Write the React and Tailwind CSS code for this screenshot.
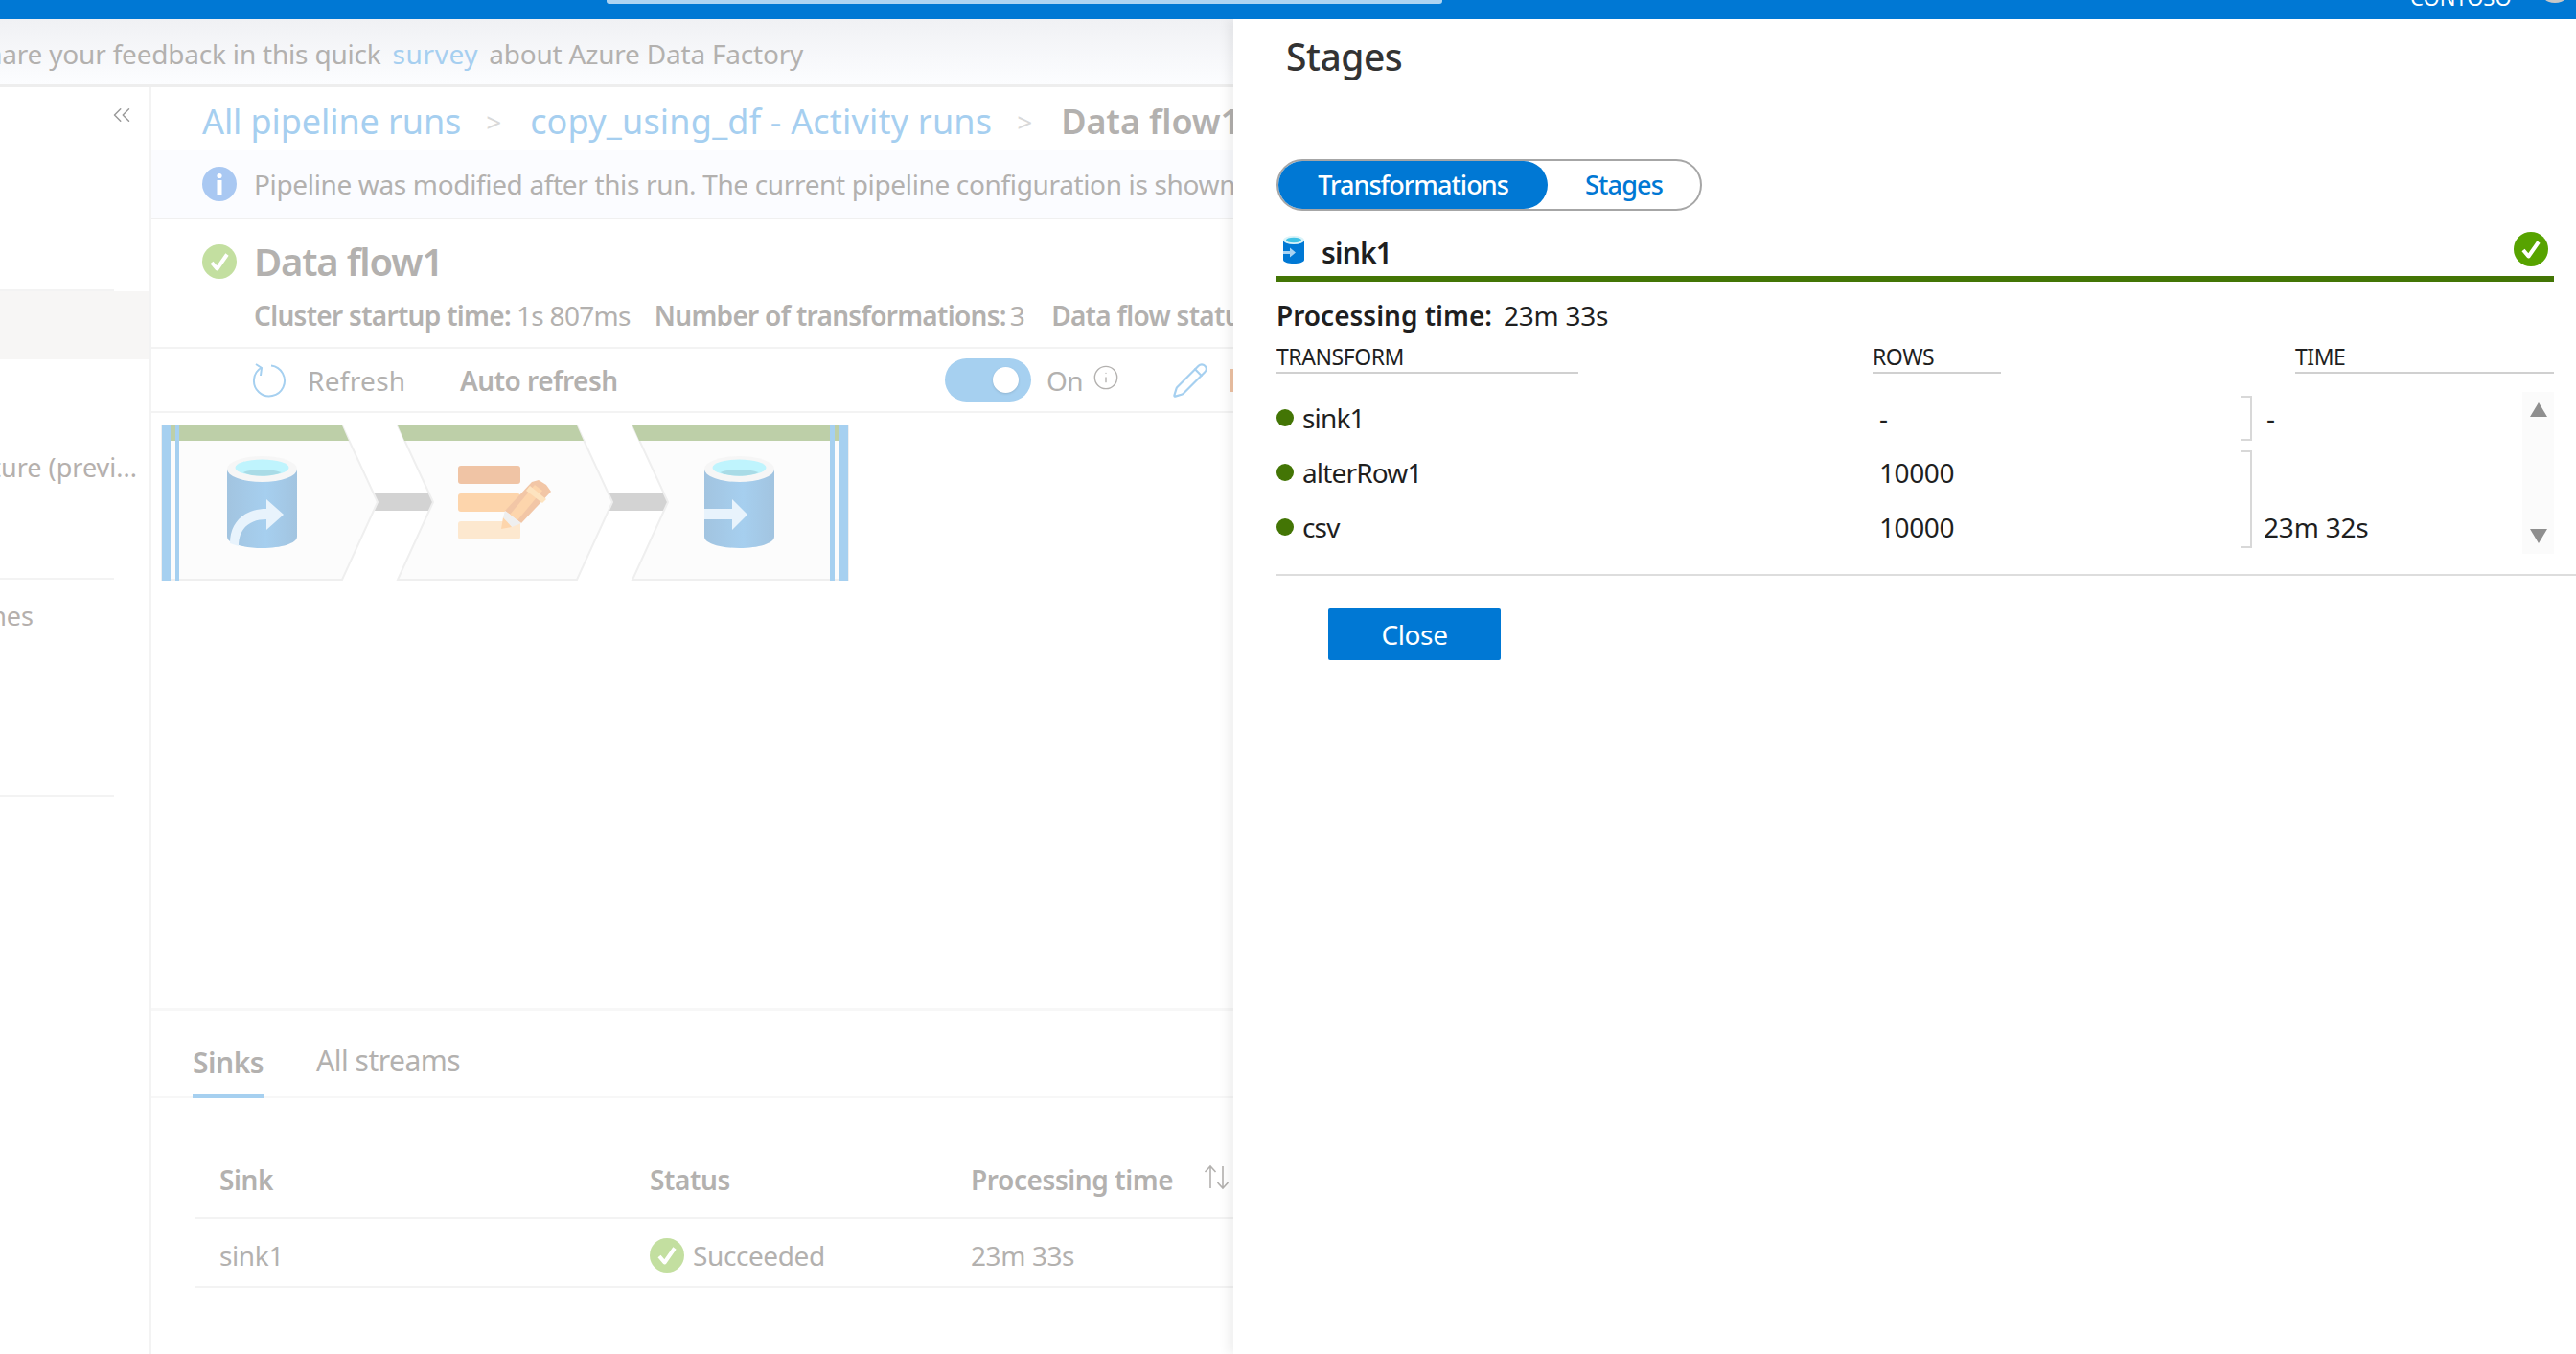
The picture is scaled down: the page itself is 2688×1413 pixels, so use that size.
import { ChevronsLeft, Info, Pencil } from 'lucide-react'

function CheckIcon({ color, size = 36 }) {
  return (
    <svg width={size} height={size} viewBox="0 0 36 36" className="shrink-0">
      <circle cx="18" cy="18" r="18" fill={color} />
      <path d="M10 19l5.5 6.5L26 10.5" fill="none" stroke="#fff" strokeWidth="4" strokeLinejoin="round" />
    </svg>
  )
}

function Cylinder({ cx, id }) {
  const l = cx - 36.5
  const r = cx + 36.5
  return (
    <g>
      <path d={`M${l} 489 L${r} 489 L${r} 560 C${r} 567 ${cx + 20} 572 ${cx} 572 C${cx - 20} 572 ${l} 567 ${l} 560 Z`} fill={`url(#${id})`} />
      <ellipse cx={cx} cy="489.5" rx="36.5" ry="13.5" fill="#f6f6f6" />
      <ellipse cx={cx} cy="488" rx="28" ry="8.5" fill="#bff4fd" />
      <path d={`M${cx - 20} 493 C${cx - 10} 489 ${cx + 10} 489 ${cx + 20} 493 C${cx + 10} 498 ${cx - 10} 498 ${cx - 20} 493 Z`} fill="#a9dbe6" />
    </g>
  )
}

function PipelineDiagram() {
  return (
    <svg width="718" height="164" viewBox="168 443 718 164" className="block">
      <defs>
        <linearGradient id="cylA" x1="0" x2="1" y1="0" y2="0">
          <stop offset="0" stopColor="#a2c4e0" />
          <stop offset="0.55" stopColor="#a6cfef" />
          <stop offset="1" stopColor="#a2c4e0" />
        </linearGradient>
      </defs>

      {/* connectors */}
      <rect x="390" y="515" width="62" height="18" fill="#d3d3d3" />
      <rect x="636" y="515" width="62" height="18" fill="#d3d3d3" />

      {/* chevrons */}
      <polygon points="169,444 357,444 394,524 357,605 169,605" fill="#fcfcfc" stroke="#efefef" strokeWidth="2" />
      <polygon points="415,444 602,444 639,524 602,605 415,605 452,524" fill="#fcfcfc" stroke="#efefef" strokeWidth="2" />
      <polygon points="660,444 885,444 885,605 660,605 697,524" fill="#fcfcfc" stroke="#efefef" strokeWidth="2" />

      {/* green headers */}
      <polygon points="169,444 357,444 364,460 169,460" fill="#bdcfa8" />
      <polygon points="415,444 602,444 609,460 422,460" fill="#bdcfa8" />
      <polygon points="660,444 884,444 884,460 667,460" fill="#bdcfa8" />

      {/* selection bars */}
      <rect x="169" y="443" width="9" height="163" fill="#a6d0f0" />
      <rect x="183" y="443" width="4" height="163" fill="#a6d0f0" />
      <rect x="866" y="443" width="5" height="163" fill="#a6d0f0" />
      <rect x="876" y="443" width="9" height="163" fill="#a6d0f0" />

      {/* source */}
      <Cylinder cx={273.5} id="cylA" />
      <path d="M240 567 C240 545 255 531 278 531 L278 521 L296 537 L278 553 L278 542 C262 542 249 550 249 570 Z" fill="#e8f3fc" />

      {/* alter row */}
      <rect x="478" y="486" width="65" height="19" rx="3" fill="#f0c4a5" />
      <rect x="478" y="515" width="65" height="19" rx="3" fill="#fdd5ac" />
      <rect x="478" y="544" width="65" height="19" rx="3" fill="#fde8cf" />
      <polygon points="527,533 544,546 575,513 570,506 562,501 555,503" fill="#f2c6a6" />
      <polygon points="532,537 540,543 566,512 558,506" fill="#fdd5ac" />
      <polygon points="553,507 570,521 566,525 549,512" fill="#fde3bf" />
      <polygon points="527,533 544,546 534,550 525,540" fill="#efefef" />
      <polygon points="525,540 534,550 523,552" fill="#fdd5ac" />

      {/* sink */}
      <Cylinder cx={771.5} id="cylA" />
      <path d="M735 531 L764 531 L764 521 L780 537 L764 553 L764 542 L735 542 Z" fill="#e8f3fc" />
    </svg>
  )
}

function Sidebar() {
  return (
    <div className="w-[158px] shrink-0 border-r-[3px] border-[#f3f3f3] overflow-hidden text-[27px] text-[#b5b0ad]">
      <div className="flex justify-end pr-[11px] pt-[14px] h-[211px] items-start">
        <ChevronsLeft size={30} strokeWidth={1.2} className="text-[#9a9a9a] mr-[2px]" />
      </div>
      <div className="w-[119px] h-[2px] bg-[#f3f3f3]" />
      <div className="h-[71px] bg-[#f7f6f5]" />
      <div className="h-[228px] pr-[12px] pt-[90px] flex justify-end whitespace-nowrap leading-[46px]">
        structure (previ...
      </div>
      <div className="w-[119px] h-[2px] bg-[#f3f3f3]" />
      <div className="h-[225px] w-[35px] flex justify-end whitespace-nowrap pt-[18px] leading-[40px]">
        Pipelines
      </div>
      <div className="w-[119px] h-[2px] bg-[#f3f3f3]" />
    </div>
  )
}

function RunDetails() {
  return (
    <div className="flex-1 min-w-0 flex flex-col text-[#b3b1af] overflow-hidden">
      {/* breadcrumb */}
      <div className="h-[66px] shrink-0 flex items-center pl-[53px] pt-[6px] text-[36px] whitespace-nowrap tracking-[-0.1px] text-[#a6cff0]">
        <span>All pipeline runs</span>
        <span className="text-[#d9d9d9] text-[28px] ml-[26px] mr-[30px]">&gt;</span>
        <span className="tracking-[0.2px]">copy_using_df - Activity runs</span>
        <span className="text-[#d9d9d9] text-[28px] ml-[26px] mr-[30px]">&gt;</span>
        <span className="font-semibold text-[#b3b1af]">Data flow1</span>
      </div>

      {/* modified notice */}
      <div className="h-[72px] shrink-0 flex items-center pl-[53px] gap-[18px] bg-[#fbfcff] border-b-2 border-[#f0f0f0] text-[28px] whitespace-nowrap tracking-[-0.35px]">
        <svg width="36" height="36" viewBox="0 0 36 36" className="shrink-0">
          <circle cx="18" cy="18" r="18" fill="#a9c8f2" />
          <circle cx="18" cy="9.5" r="2.6" fill="#fff" />
          <rect x="15.5" y="14" width="5" height="15" fill="#fff" />
        </svg>
        <span>Pipeline was modified after this run. The current pipeline configuration is shown</span>
      </div>

      {/* title and stats */}
      <div className="h-[135px] shrink-0 border-b-2 border-[#f3f3f3] pl-[53px] pt-[26px]">
        <div className="flex items-center gap-[18px] h-[36px]">
          <CheckIcon color="#c3dfa0" />
          <span className="text-[40px] font-semibold tracking-[-1.2px]">Data flow1</span>
        </div>
        <div className="flex items-center pl-[54px] mt-[17px] text-[28px] whitespace-nowrap tracking-[-0.7px]">
          <span className="font-semibold">Cluster startup time:</span>
          <span className="ml-[6px]">1s 807ms</span>
          <span className="font-semibold ml-[25px]">Number of transformations:</span>
          <span className="ml-[4px]">3</span>
          <span className="font-semibold ml-[28px]">Data flow status</span>
        </div>
      </div>

      {/* toolbar */}
      <div className="h-[67px] shrink-0 flex items-center border-b-2 border-[#f3f3f3] text-[28px] whitespace-nowrap tracking-[-0.5px]">
        <svg width="38" height="38" viewBox="0 0 38 38" className="ml-[103px] shrink-0" fill="none" stroke="#a6d0f0" strokeWidth="2">
          <path d="M12 5.5 A16 16 0 1 0 22 3.5" />
          <path d="M6 2l6 4 -1 8" />
        </svg>
        <span className="ml-[22px] w-[159px] shrink-0 tracking-[0.3px]">Refresh</span>
        <span className="font-semibold w-[506px] shrink-0">Auto refresh</span>
        <div className="w-[90px] h-[45px] shrink-0 rounded-full bg-[#a6d0f0] flex items-center justify-end pr-[13px]">
          <div className="w-[27px] h-[27px] rounded-full bg-white shadow-sm" />
        </div>
        <span className="ml-[16px]">On</span>
        <Info size={28} strokeWidth={1.2} className="ml-[10px] -mt-[6px] shrink-0" />
        <Pencil size={40} strokeWidth={1.3} className="ml-[54px] shrink-0 text-[#a6d0f0]" />
        <div className="ml-[22px] w-[4px] h-[24px] shrink-0 bg-[#f0c4a5]" />
      </div>

      {/* diagram */}
      <div className="flex-1 pl-[10px] pt-[12px]">
        <PipelineDiagram />
      </div>

      {/* tabs */}
      <div className="h-[94px] shrink-0 border-t-[3px] border-b-2 border-[#f7f7f7] flex items-end pl-[45px] gap-[56px] text-[30px] tracking-[-0.5px]">
        <div className="h-[74px] pt-[14px] border-b-4 border-[#a6d0f0] font-semibold flex items-start -mb-[2px] -ml-[2px]">Sinks</div>
        <div className="h-[74px] pt-[14px] flex items-start -ml-[1px]">All streams</div>
      </div>

      {/* sink table */}
      <div className="pl-[45px] pt-[64px] h-[267px] shrink-0 text-[28px] tracking-[-0.4px] whitespace-nowrap">
        <div className="grid grid-cols-[449px_335px_1fr] h-[62px] items-center border-b-2 border-[#f3f3f3] font-semibold pb-[18px] pl-[26px]">
          <span>Sink</span>
          <span>Status</span>
          <span className="flex items-center overflow-hidden">
            Processing time
            <svg width="30" height="30" viewBox="0 0 30 30" className="ml-[32px] -mt-[6px] shrink-0" fill="none" stroke="#b3b1af" strokeWidth="1.6">
              <path d="M7 27V4M1.5 10L7 4l5.5 6M20 4v23M14.5 21L20 27l5.500-6" />
            </svg>
          </span>
        </div>
        <div className="grid grid-cols-[449px_335px_1fr] h-[72px] items-center border-b-2 border-[#f3f3f3] pl-[26px] pt-[6px]">
          <span>sink1</span>
          <span className="flex items-center gap-[9px]">
            <CheckIcon color="#c3dfa0" />
            Succeeded
          </span>
          <span>23m 33s</span>
        </div>
      </div>
    </div>
  )
}

function SinkGlyph() {
  return (
    <svg width="22" height="29" viewBox="0 0 22 29" className="shrink-0">
      <path d="M0 5h22v20c0 2.500-5 4-11 4S0 27.500 0 25z" fill="#0078d4" />
      <ellipse cx="11" cy="4.500" rx="11" ry="4.500" fill="#d9f3f9" />
      <ellipse cx="11" cy="4.500" rx="8" ry="2.800" fill="#40c2e5" />
      <path d="M0 16h7v-3.500l6 5 -6 5V19H0z" fill="#a9d3f2" />
    </svg>
  )
}

function Triangle({ down }) {
  return (
    <svg width="18" height="15" viewBox="0 0 18 15">
      <polygon points={down ? '0,0 18,0 9,15' : '9,0 18,15 0,15'} fill="#8f8f8f" />
    </svg>
  )
}

const ROWS = [
  { name: 'sink1', rows: '-' },
  { name: 'alterRow1', rows: '10000' },
  { name: 'csv', rows: '10000' },
]

function StagesPanel() {
  return (
    <div className="absolute left-[1287px] right-0 top-[20px] bottom-0 bg-white shadow-[-6px_0_10px_rgba(0,0,0,0.06)] pl-[45px] text-[#1f1f1f]">
      <h1 className="text-[39px] leading-[54px] pl-[10px] pt-[12px] h-[146px] font-medium text-[#333] tracking-[-0.5px]">Stages</h1>

      {/* view switch */}
      <div className="w-[444px] h-[54px] rounded-full border-2 border-[#a6a6a6] flex items-center text-[27px] tracking-[-0.5px]">
        <div className="w-[281px] h-full rounded-full bg-[#0078d4] text-white font-medium flex items-center justify-center tracking-[-0.95px]">Transformations</div>
        <div className="flex-1 text-[#0078d4] font-medium flex items-center justify-center tracking-[-0.8px]">Stages</div>
      </div>

      {/* sink header */}
      <div className="mt-[22px] w-[1333px] h-[52px] border-b-[6px] border-[#437505] flex items-start relative">
        <div className="ml-[7px] mt-[4px]"><SinkGlyph /></div>
        <span className="ml-[18px] mt-[3px] text-[30px] leading-[38px] font-semibold tracking-[-0.8px]">sink1</span>
        <div className="absolute right-[6px] top-0"><CheckIcon color="#57a300" /></div>
      </div>

      <div className="mt-[15px] h-[40px] flex items-center text-[28px] tracking-[-0.25px] whitespace-nowrap">
        <span className="font-semibold tracking-[0px]">Processing time:</span>
        <span className="ml-[12px]">23m 33s</span>
      </div>

      {/* stage table */}
      <div className="w-[1333px] relative">
        <div className="grid grid-cols-[315px_307px_134px_307px_270px] h-[39px] text-[23px] tracking-[-0.45px] mt-[2px]">
          <span className="border-b-2 border-[#d0d0d0] h-[39px] pt-[5px] leading-[32px]">TRANSFORM</span>
          <span />
          <span className="border-b-2 border-[#d0d0d0] h-[39px] pt-[5px] leading-[32px]">ROWS</span>
          <span />
          <span className="border-b-2 border-[#d0d0d0] h-[39px] pt-[5px] leading-[32px]">TIME</span>
        </div>

        <div className="mt-[19px] h-[169px] flex">
          <div className="w-[1006px] shrink-0 -mt-[2px]">
            {ROWS.map((r) => (
              <div key={r.name} className="grid grid-cols-[622px_1fr] h-[57px] items-center text-[28px] tracking-[-0.4px]">
                <span className="flex items-center gap-[9px]">
                  <span className="w-[18px] h-[18px] rounded-full bg-[#437505]" />
                  <span className="tracking-[-0.85px]">{r.name}</span>
                </span>
                <span className="pl-[7px]">{r.rows}</span>
              </div>
            ))}
          </div>

          {/* stage brackets */}
          <div className="w-[24px] shrink-0 pt-[4px]">
            <div className="w-[12px] h-[47px] border-y-2 border-r-2 border-[#d8d8d8]" />
            <div className="w-[12px] h-[102px] border-y-2 border-r-2 border-[#d8d8d8] mt-[10px]" />
          </div>
          <div className="w-[270px] shrink-0 text-[28px] tracking-[-0.2px] -mt-[2px]">
            <div className="h-[57px] flex items-center pl-[3px]">-</div>
            <div className="h-[57px]" />
            <div className="h-[57px] flex items-center">23m 32s</div>
          </div>
          <div className="w-[33px] shrink-0 bg-[#fbfbfb] flex flex-col justify-between items-center py-[11px]">
            <Triangle />
            <Triangle down />
          </div>
        </div>
      </div>

      <div className="mt-[21px] h-[2px] bg-[#dddddd]" />

      <button className="mt-[34px] ml-[54px] w-[180px] h-[54px] rounded-[2px] bg-[#0078d4] text-white text-[28px] tracking-[-0.4px]">Close</button>
    </div>
  )
}

export default function App() {
  return (
    <div className="relative w-[2688px] h-[1413px] overflow-hidden bg-white font-['Noto_Sans','Open_Sans',sans-serif]">
      {/* top bar */}
      <div className="relative z-10 h-[20px] bg-[#0078d4] flex items-start overflow-hidden">
        <div className="ml-[633px] w-[872px] h-[4px] rounded-b-[3px] bg-[#aed4f2]" />
        <span className="ml-[1010px] -mt-[19px] w-[110px] text-[22px] leading-[32px] text-white whitespace-nowrap">CONTOSO</span>
        <div className="ml-[23px] -mt-[34px] w-[36px] h-[37px] rounded-full bg-[#c8c8c8]" />
      </div>

      {/* feedback banner */}
      <div className="h-[71px] border-b-[3px] border-[#eeeeee] pt-[3px] bg-gradient-to-b from-[#f0f1f4] to-[#fcfdff] flex items-center overflow-hidden text-[28px] tracking-[-0.2px] text-[#b3b1af] whitespace-nowrap w-[1287px]">
        <span className="-ml-[30px]">Share your feedback in this quick</span>
        <span className="ml-[12px] text-[#a6cff0] tracking-[0.6px]">survey</span>
        <span className="ml-[11px]">about Azure Data Factory</span>
      </div>

      <div className="flex w-[1287px] h-[1322px]">
        <Sidebar />
        <RunDetails />
      </div>

      <StagesPanel />
    </div>
  )
}
